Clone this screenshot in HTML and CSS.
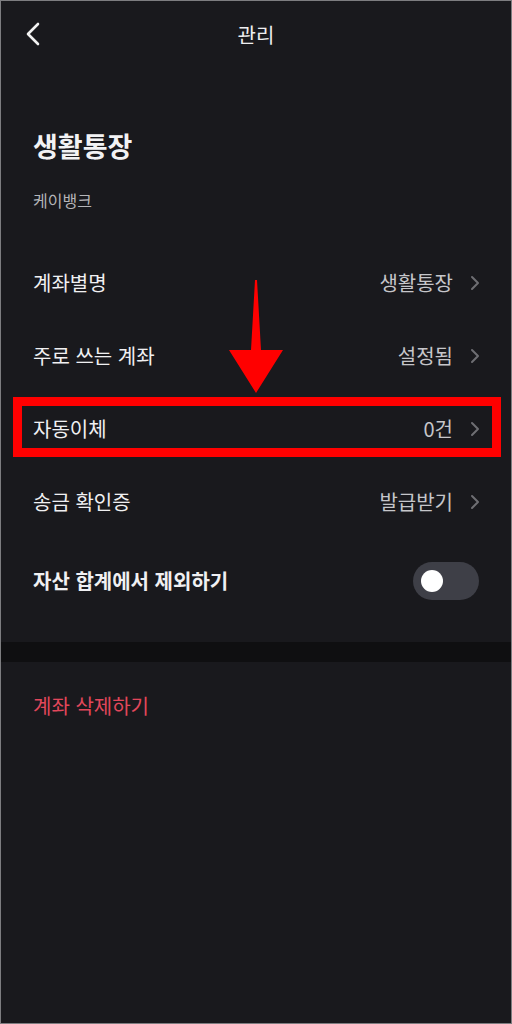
FILE: index.html
```html
<!DOCTYPE html>
<html lang="ko">
<head>
    <meta charset="UTF-8">
    <meta name="viewport" content="width=device-width, initial-scale=1.0">
    <title>관리</title>
    <link rel="stylesheet" href="styles.css">
</head>
<body>
    <div class="screen">
        <header class="topbar">
            <button class="back" type="button" aria-label="뒤로">
                <svg width="16" height="24" viewBox="0 0 16 24"><polyline points="13,2 3,12 13,22" fill="none" stroke="#f2f2f2" stroke-width="2.6" stroke-linecap="round" stroke-linejoin="round"/></svg>
            </button>
            <h1 class="title">관리</h1>
            <span></span>
        </header>

        <section class="account">
            <h2 class="account-name">생활통장</h2>
            <p class="bank">케이뱅크</p>
        </section>

        <ul class="menu">
            <li class="row">
                <span class="label">계좌별명</span>
                <span class="value">생활통장<svg class="chev" width="10" height="16" viewBox="0 0 10 16"><polyline points="2,2 8,8 2,14" fill="none" stroke="#6e6e73" stroke-width="2" stroke-linecap="round" stroke-linejoin="round"/></svg></span>
            </li>
            <li class="row">
                <span class="label">주로 쓰는 계좌</span>
                <span class="value">설정됨<svg class="chev" width="10" height="16" viewBox="0 0 10 16"><polyline points="2,2 8,8 2,14" fill="none" stroke="#6e6e73" stroke-width="2" stroke-linecap="round" stroke-linejoin="round"/></svg></span>
            </li>
            <li class="row marked">
                <span class="label">자동이체</span>
                <span class="value">0건<svg class="chev" width="10" height="16" viewBox="0 0 10 16"><polyline points="2,2 8,8 2,14" fill="none" stroke="#6e6e73" stroke-width="2" stroke-linecap="round" stroke-linejoin="round"/></svg></span>
                <span class="highlight"></span>
            </li>
            <li class="row">
                <span class="label">송금 확인증</span>
                <span class="value">발급받기<svg class="chev" width="10" height="16" viewBox="0 0 10 16"><polyline points="2,2 8,8 2,14" fill="none" stroke="#6e6e73" stroke-width="2" stroke-linecap="round" stroke-linejoin="round"/></svg></span>
            </li>
            <li class="row toggle-row">
                <span class="label strong">자산 합계에서 제외하기</span>
                <span class="toggle"><span class="knob"></span></span>
            </li>
        </ul>

        <div class="divider"></div>

        <div class="danger">계좌 삭제하기</div>

        <svg class="arrow" width="56" height="116" viewBox="0 0 56 116"><path d="M26 0 H28 L32 70 H54 L27 113 L0 70 H22 Z" fill="#ff0000"/></svg>
    </div>
</body>
</html>
```

FILE: styles.css
```css
* {
    box-sizing: border-box;
}
body {
    margin: 0;
    background: #19191d;
    font-family: "Noto Sans CJK KR", "Noto Sans", sans-serif;
    color: #f2f2f4;
}
.screen {
    position: relative;
    height: 1024px;
    border: 1px solid #7d7d80;
    background: #19191d;
}
.topbar {
    display: grid;
    grid-template-columns: 1fr auto 1fr;
    align-items: center;
    height: 67px;
    padding: 0 24px;
}
.back {
    background: none;
    border: none;
    padding: 0;
    width: 16px;
    height: 24px;
    display: flex;
    margin-top: -2px;
}
.title {
    margin: 0;
    font-size: 20px;
    font-weight: 400;
    line-height: 28px;
    color: #eeeef0;
}
.account {
    padding: 60px 32px 0;
}
.account-name {
    margin: 0;
    font-size: 27px;
    font-weight: 700;
    line-height: 36px;
}
.bank {
    margin: 25px 0 0;
    font-size: 16px;
    line-height: 22px;
    color: #b4b4b8;
}
.menu {
    list-style: none;
    margin: 35px 0 0;
    padding: 0 0 23px;
}
.row {
    position: relative;
    display: flex;
    align-items: center;
    justify-content: space-between;
    height: 73px;
    padding: 0 32px;
    font-size: 20px;
}
.label {
    color: #f0f0f2;
}
.label.strong {
    font-weight: 700;
}
.value {
    display: flex;
    align-items: center;
    gap: 17px;
    color: #c6c6ca;
}
.chev {
    margin-right: -1px;
}
.toggle-row {
    height: 81px;
    padding-top: 4px;
}
.toggle {
    display: flex;
    align-items: center;
    width: 66px;
    height: 38px;
    padding: 0 8px;
    border-radius: 19px;
    background: #3e3f47;
}
.knob {
    width: 22px;
    height: 22px;
    border-radius: 50%;
    background: #ffffff;
}
.highlight {
    position: absolute;
    left: 12px;
    right: 10px;
    top: 5px;
    bottom: 8px;
    border: 9px solid #ff0000;
}
.divider {
    height: 20px;
    background: #0f0f11;
}
.danger {
    padding: 31px 32px 0;
    font-size: 20px;
    line-height: 26px;
    color: #e2475b;
}
.arrow {
    position: absolute;
    left: 228px;
    top: 279px;
}
```
